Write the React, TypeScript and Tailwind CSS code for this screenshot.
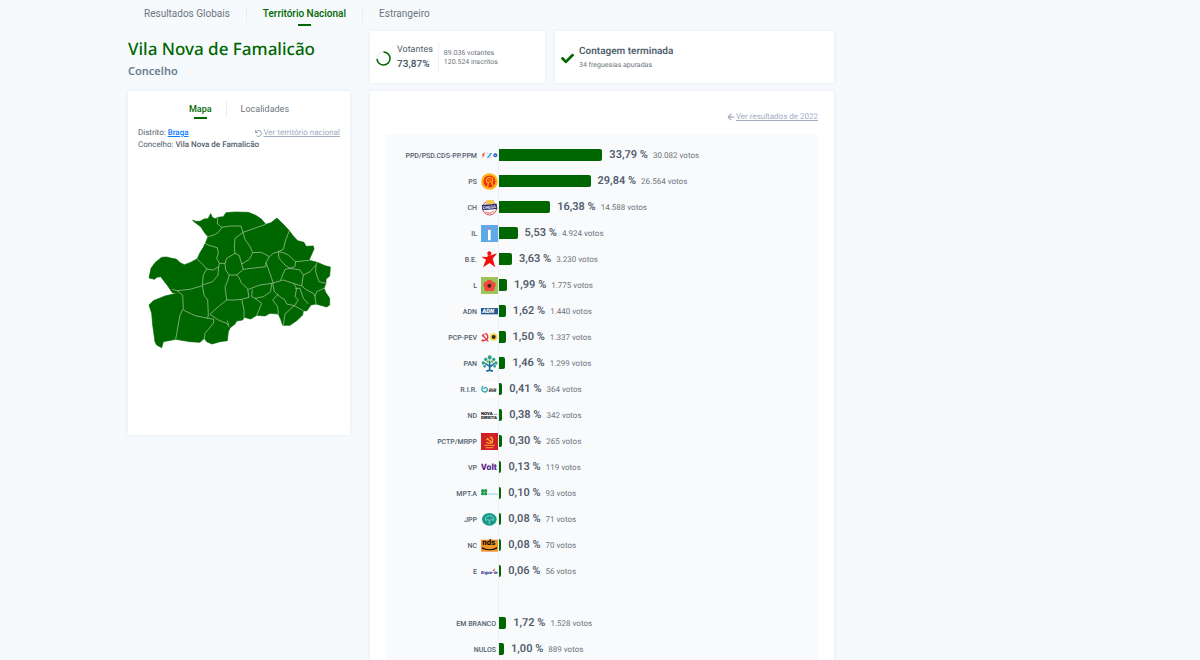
import { useState, type ReactNode } from 'react'
import { FaArrowLeft, FaCheck, FaUndo } from 'react-icons/fa'

interface Result {
  party: string
  percent: number
  votes: number
  logo?: ReactNode
}

const LOGO = 'block w-[17px] h-[17px]'

const results: Result[] = [
  {
    party: 'PPD/PSD.CDS-PP.PPM', percent: 33.79, votes: 30082,
    logo: (
      <svg viewBox="0 0 51 51" className={LOGO}>
        <path d="M8 17l-6 8h4l-3 9 9-11H8l4-6z" fill="#e8503a" />
        <path d="M17 32l8-9 2-5 6 0-3 6-8 9z" fill="#2ea3e6" />
        <path d="M18 20h5M28 31h5" stroke="#f0a04b" strokeWidth="2" />
        <circle cx="43" cy="25" r="6" fill="#1e56b8" />
        <path d="M40 25h6" stroke="#fff" strokeWidth="2" />
      </svg>
    ),
  },
  {
    party: 'PS', percent: 29.84, votes: 26564,
    logo: (
      <svg viewBox="0 0 51 51" className={LOGO}>
        <circle cx="25.500" cy="25.500" r="25" fill="#fdb515" />
        <circle cx="25.500" cy="25.500" r="18" fill="#f02a10" />
        <path d="M20 42l2-12c-6-2-8-8-4-13 4-5 12-5 16 0 2 4 1 9-2 12l5 10" fill="none" stroke="#fdb515" strokeWidth="4" />
        <path d="M22 20l8 2M23 26l7 1" stroke="#fdb515" strokeWidth="3" />
      </svg>
    ),
  },
  {
    party: 'CH', percent: 16.38, votes: 14588,
    logo: (
      <svg viewBox="0 0 51 51" className={LOGO}>
        <circle cx="26" cy="27" r="21" fill="#fff" stroke="#d9485a" strokeWidth="3" />
        <path d="M16 4l22-1 2 12-25 2z" fill="#f2c94c" />
        <path d="M14 38q12 10 25-2" fill="none" stroke="#e0a18a" strokeWidth="5" />
        <path d="M2 18l45-4 2 16-45 4z" fill="#2a2a6c" />
        <text x="5" y="29" fontSize="12" fontWeight="700" fill="#fff" transform="rotate(-5 25 25)">CHEGA</text>
      </svg>
    ),
  },
  {
    party: 'IL', percent: 5.53, votes: 4924,
    logo: (
      <svg viewBox="0 0 51 51" className={LOGO}>
        <rect width="51" height="51" fill="#5fa9e8" />
        <path d="M21 46V16l4-5 4 5v30z" fill="#fff" />
        <circle cx="25" cy="11" r="3" fill="#e96a6a" />
      </svg>
    ),
  },
  {
    party: 'B.E.', percent: 3.63, votes: 3230,
    logo: (
      <svg viewBox="0 0 51 51" className={LOGO}>
        <circle cx="25" cy="7" r="6" fill="#f40b0b" />
        <path d="M20 13l10 0 18-6-13 16 8 26-17-13-20 13 9-23L1 17l18 1z" fill="#f40b0b" />
      </svg>
    ),
  },
  {
    party: 'L', percent: 1.99, votes: 1775,
    logo: (
      <svg viewBox="0 0 51 51" className={LOGO}>
        <rect width="51" height="51" fill="#9cc35c" />
        <g fill="#ef4a3c">
          <circle cx="25" cy="17" r="9" />
          <circle cx="16" cy="23" r="9" />
          <circle cx="35" cy="23" r="9" />
          <circle cx="19" cy="34" r="9" />
          <circle cx="32" cy="34" r="9" />
        </g>
        <circle cx="25" cy="26" r="6" fill="#4a1f1a" />
      </svg>
    ),
  },
  {
    party: 'ADN', percent: 1.62, votes: 1440,
    logo: (
      <svg viewBox="0 0 51 51" className={LOGO}>
        <rect y="15" width="51" height="19" fill="#245a96" />
        <text x="4" y="31" fontSize="18" fontWeight="900" fontStyle="italic" fill="#fff">ADN</text>
        <path d="M25 31l4-12" stroke="#e8d24a" strokeWidth="2" />
      </svg>
    ),
  },
  {
    party: 'PCP-PEV', percent: 1.5, votes: 1337,
    logo: (
      <svg viewBox="0 0 51 51" className={LOGO}>
        <path d="M13 13c10 4 10 18-1 21-4 1-7 0-9-2M6 20l16 17M3 22l7-7M2 37l5-5" fill="none" stroke="#e2343c" strokeWidth="4" />
        <circle cx="38" cy="24" r="11" fill="#f5d63c" />
        <circle cx="38" cy="24" r="6" fill="#3a2317" />
      </svg>
    ),
  },
  {
    party: 'PAN', percent: 1.46, votes: 1299,
    logo: (
      <svg viewBox="0 0 51 51" className={LOGO}>
        <path d="M26 49V18M26 34L12 25M26 36l15-11M16 49q10-6 20 0" fill="none" stroke="#1f6f9c" strokeWidth="5" />
        <g fill="#2aa18f">
          <circle cx="26" cy="7" r="6" />
          <circle cx="14" cy="13" r="5" />
          <circle cx="38" cy="13" r="5" />
          <circle cx="7" cy="24" r="5" />
          <circle cx="45" cy="24" r="5" />
          <circle cx="11" cy="34" r="4" />
          <circle cx="41" cy="34" r="4" />
        </g>
        <g fill="#7cc06a">
          <circle cx="20" cy="20" r="4" />
          <circle cx="33" cy="20" r="4" />
          <circle cx="26" cy="14" r="3" />
        </g>
      </svg>
    ),
  },
  {
    party: 'R.I.R.', percent: 0.41, votes: 364,
    logo: (
      <svg viewBox="0 0 51 51" className={LOGO}>
        <rect y="2" width="51" height="47" fill="#fff" />
        <path d="M6 15c-6 8-3 18 5 18 9 0 11-10 4-13-4-2-7 2-6 5" fill="none" stroke="#35a7b8" strokeWidth="4" />
        <text x="23" y="34" fontSize="15" fontWeight="900" fontStyle="italic" fill="#333">RIR</text>
      </svg>
    ),
  },
  {
    party: 'ND', percent: 0.38, votes: 342,
    logo: (
      <svg viewBox="0 0 51 51" className={LOGO}>
        <text x="0" y="24" fontSize="13" fontWeight="900" fill="#111">NOVA</text>
        <path d="M38 22h11" stroke="#777" strokeWidth="2" />
        <text x="0" y="35" fontSize="13" fontWeight="900" fill="#111">DIREITA</text>
      </svg>
    ),
  },
  {
    party: 'PCTP/MRPP', percent: 0.3, votes: 265,
    logo: (
      <svg viewBox="0 0 51 51" className={LOGO}>
        <rect width="51" height="51" fill="#d01f27" />
        <path d="M27 12c11 3 10 17-1 19-5 0-8-1-10-4M20 18l15 13M16 21l6-6" fill="none" stroke="#f3a72e" strokeWidth="4" />
        <path d="M10 37h31M14 44h23" stroke="#f08a2c" strokeWidth="4" />
      </svg>
    ),
  },
  {
    party: 'VP', percent: 0.13, votes: 119,
    logo: (
      <svg viewBox="0 0 51 51" className={LOGO}>
        <text x="0" y="34" fontSize="26" fontWeight="900" fill="#5b2a8c">Volt</text>
      </svg>
    ),
  },
  {
    party: 'MPT.A', percent: 0.1, votes: 93,
    logo: (
      <svg viewBox="0 0 51 51" className={LOGO}>
        <g fill="#1f9a4d">
          <circle cx="5" cy="17" r="5" />
          <circle cx="14" cy="17" r="5" />
          <circle cx="5" cy="26" r="5" />
          <circle cx="14" cy="26" r="5" />
        </g>
        <text x="20" y="30" fontSize="10" fill="#63c6d8">aliança</text>
      </svg>
    ),
  },
  {
    party: 'JPP', percent: 0.08, votes: 71,
    logo: (
      <svg viewBox="0 0 51 51" className={LOGO}>
        <ellipse cx="25" cy="25" rx="22" ry="19" fill="#179b8b" />
        <path d="M14 28q-4-12 11-14 16 2 12 14-6-4-12 0-5-4-11 0zM25 28v12" fill="none" stroke="#7fd0c2" strokeWidth="3" />
      </svg>
    ),
  },
  {
    party: 'NC', percent: 0.08, votes: 70,
    logo: (
      <svg viewBox="0 0 51 51" className={LOGO}>
        <rect y="8" width="51" height="36" fill="#f3962a" />
        <text x="4" y="25" fontSize="24" fontWeight="900" fill="#1a1008">nds</text>
        <path d="M3 30q22 14 45 0v5q-22 10-45 0z" fill="#1a1008" />
      </svg>
    ),
  },
  {
    party: 'E', percent: 0.06, votes: 56,
    logo: (
      <svg viewBox="0 0 51 51" className={LOGO}>
        <text x="0" y="34" fontSize="13" fontWeight="900" fontStyle="italic" fill="#2c2f8f">Ergue-te</text>
        <path d="M34 24l8-9-2 9z" fill="#e8402f" />
      </svg>
    ),
  },
]

const otherVotes: Result[] = [
  { party: 'EM BRANCO', percent: 1.72, votes: 1528 },
  { party: 'NULOS', percent: 1, votes: 889 },
]

const formatPercent = (n: number) => n.toFixed(2).replace('.', ',')
const formatVotes = (n: number) => String(n).replace(/\B(?=(\d{3})+$)/g, '.')

function ResultRow({ result }: { result: Result }) {
  return (
    <tr className="h-[26px]">
      <th
        scope="row"
        colSpan={result.logo ? 1 : 2}
        className={result.logo
          ? 'w-[91px] p-0 pt-[2px] text-right text-[7px] leading-3 font-medium whitespace-nowrap'
          : 'p-0 pt-[2px] pr-[2px] text-right text-[7px] leading-3 font-medium whitespace-nowrap'}
      >
        {result.party}
      </th>
      {result.logo && <td className="w-[21px] p-0 pl-1">{result.logo}</td>}
      <td className="border-l border-[#eceff4] p-0">
        <div className="flex items-center">
          <div className="h-3 rounded-r-xs bg-[#006600]" style={{ width: result.percent * 3 + 2 }} />
          <span className="ml-[7px] text-[11px] leading-4 font-semibold">{formatPercent(result.percent)} %</span>
          <span className="ml-[5px] pt-px text-[8px] text-[#6c757d]">{formatVotes(result.votes)} votos</span>
        </div>
      </td>
    </tr>
  )
}

// parish borders inside the municipality
const borders = [
  'M233 53L232 72 246 82 235 97 222 105 205 110',
  'M246 82L270 78 303 78 309 97 377 73',
  'M195 130L210 137 232 143 235 160 230 175 238 190 255 190 260 175 285 160 283 140 285 115 309 97',
  'M172 178L185 190 195 200 200 207 220 210 236 200 238 190',
  'M200 207L190 225 187 255 218 245 234 225 236 200',
  'M97 268L110 272 150 268 187 257 192 285 203 300 205 345 203 355',
  'M110 272L128 285 130 325 120 345 107 418',
  'M130 330L165 347 205 355 222 358 220 370 195 400 193 415',
  'M255 190L257 210 268 225 290 225 310 208 305 192 298 167 285 160',
  'M268 225L262 245 255 262 260 300 235 320 210 343 235 360 260 370 268 382M262 362L266 376',
  'M260 300L285 300 305 298 327 292 323 268',
  'M309 97L315 118 330 140 338 158 328 178 305 192',
  'M338 158L365 157 388 170 400 160 415 155 430 148 437 120 448 92',
  'M388 170L378 188 377 200 335 205 310 208M378 188L388 215 400 250',
  'M290 225L297 232 305 250 325 268 360 255 395 250 430 240 460 250 485 258',
  'M415 155L417 175 435 195 450 205 465 200 467 185 445 165 430 158 415 155',
  'M467 185L507 181M450 205L435 208 422 240',
  'M450 205L480 210 490 225 485 258 500 270 520 280 525 290',
  'M490 225L510 215 528 195 532 187M528 195L527 215 537 245 558 250',
  'M552 265L530 275 525 290 528 312',
  'M460 250L470 265 465 290 475 300 463 317 490 332M465 265L480 265 490 295 505 312',
  'M463 317L435 342 430 376M398 250L403 275 420 290 435 300 440 312 463 317',
  'M415 282L398 300 413 320 415 342M395 250L392 275 370 290 345 295 335 290 337 268',
  'M305 298L312 330 312 352M345 295L365 310 355 335 350 346',
]

function MunicipalityMap() {
  return (
    <svg viewBox="18 27 558 420" className="mx-auto mt-[58px] w-[186px]" role="img" aria-label="Mapa de Vila Nova de Famalicão">
      <path
        fill="#006600"
        stroke="#006600"
        strokeWidth="2"
        strokeLinejoin="round"
        d="M27 234L33 205 45 188 65 172 80 171 95 175 108 177 122 189 133 194 150 188 172 176 180 158 190 142 198 125 204 110 195 100 182 80 163 66 158 60 167 64 180 64 192 57 204 56 212 41 217 52 225 56 235 52 250 50 258 38 285 36 325 37 347 46 365 58 377 73 393 68 411 54 430 73 448 92 458 106 473 122 492 127 498 139 520 138 522 147 507 181 532 187 555 197 571 201 569 228 558 238 558 250 552 265 557 277 569 295 569 315 560 321 528 312 513 315 500 333 490 332 488 345 470 362 450 376 428 376 422 358 415 342 390 340 375 348 350 346 332 357 312 352 308 360 290 363 285 372 270 384 265 395 262 422 240 425 216 432 200 425 193 415 180 427 150 425 107 418 70 425 65 443 50 435 45 425 38 375 35 340 27 315 40 302 75 288 110 280 97 278 85 260 62 230 50 232 44 238z"
      />
      <path fill="none" stroke="#b5cfa9" strokeWidth="2" strokeLinejoin="round" d={borders.join('')} />
    </svg>
  )
}

const levels = ['Resultados Globais', 'Território Nacional', 'Estrangeiro']
const views = ['Mapa', 'Localidades']

export default function App() {
  const [level, setLevel] = useState('Território Nacional')
  const [view, setView] = useState('Mapa')

  return (
    <div className="min-h-screen bg-[#f6fafd] px-32 font-[Roboto,sans-serif] text-[#525f6e] [text-rendering:geometricPrecision]">
      <nav className="flex h-[27px] divide-x divide-[#e9edf2] pt-[6px]">
        {levels.map(l => (
          <div key={l} className="flex h-4 items-start px-4">
            <button
              onClick={() => setLevel(l)}
              className={l === level
                ? 'flex flex-col items-center text-[10px] leading-4 font-medium text-[#006600]'
                : 'text-[10px] leading-4 text-[#6c757d]'}
            >
              {l}
              {l === level && <span className="mt-[2px] h-[2px] w-[13px] bg-[#006600]" />}
            </button>
          </div>
        ))}
      </nav>

      <div className="grid grid-cols-[minmax(0,222fr)_minmax(0,464fr)_minmax(0,218fr)] items-start gap-5 pt-1">
        <aside>
          <div className="h-[60px] pt-1 font-['Noto_Sans',sans-serif]">
            <h1 className="text-[17px] leading-7 font-medium whitespace-nowrap text-[#006600]">Vila Nova de Famalicão</h1>
            <h2 className="pt-px text-[11px] leading-4 font-semibold text-[#6b7a90]">Concelho</h2>
          </div>
          <section className="h-[344px] rounded-xs bg-white px-[10px] shadow-[0_0_4px_#e4eaf1]">
            <div className="flex justify-center divide-x divide-[#e9edf2] pt-[10px]">
              {views.map(v => (
                <div key={v} className="flex h-4 items-start px-[14px]">
                  <button
                    onClick={() => setView(v)}
                    className={v === view
                      ? 'flex flex-col items-center text-[9px] leading-4 font-medium text-[#006600]'
                      : 'text-[9px] leading-4 text-[#6c757d]'}
                  >
                    {v}
                    {v === view && <span className="h-[2px] w-[13px] bg-[#006600]" />}
                  </button>
                </div>
              ))}
            </div>
            <div className="pt-[10px] text-[8px] leading-3 whitespace-nowrap">
              <div className="flex justify-between">
                <p>Distrito: <a href="#braga" className="font-medium text-[#0a7cff] underline">Braga</a></p>
                <a href="#nacional" className="flex items-center gap-px text-[#a3acbf]">
                  <FaUndo className="text-[7px]" />
                  <span className="underline">Ver território nacional</span>
                </a>
              </div>
              <p>Concelho: <span className="font-medium">Vila Nova de Famalicão</span></p>
            </div>
            <MunicipalityMap />
          </section>
        </aside>

        <main>
          <div className="mb-2 flex gap-[10px]">
            <section className="flex h-[52px] w-[175px] items-center bg-white pt-[2px] pl-[6px] shadow-[0_0_4px_#e4eaf1]">
              <svg viewBox="0 0 15 15" className="size-[15px]">
                <circle cx="7.500" cy="7.500" r="6.500" fill="none" stroke="#e6ebf0" />
                <circle
                  cx="7.500" cy="7.500" r="6.500" fill="none" stroke="#006600" strokeWidth="1.500"
                  pathLength="100" strokeDasharray="73.870 100" transform="rotate(-90 7.500 7.500)"
                />
              </svg>
              <div className="ml-[6px] border-r border-[#eef1f5] pr-[5px]">
                <p className="text-[9px] leading-[14px]">Votantes</p>
                <p className="text-[10px] leading-4 font-semibold">73,87%</p>
              </div>
              <div className="ml-[5px] pb-px text-[7px] leading-[9px] text-[#6c757d]">
                <p>89.036 votantes</p>
                <p>120.524 inscritos</p>
              </div>
            </section>
            <section className="flex h-[52px] flex-1 items-center bg-white pt-[2px] pl-[6px] shadow-[0_0_4px_#e4eaf1]">
              <FaCheck className="text-[13px] text-[#006600]" />
              <div className="ml-[5px]">
                <p className="text-[10px] leading-[14px] font-semibold">Contagem terminada</p>
                <p className="text-[7px] leading-3 text-[#6c757d]">34 freguesias apuradas</p>
              </div>
            </section>
          </div>

          <section className="bg-white px-4 pt-5 pb-6 shadow-[0_0_4px_#e4eaf1]">
            <a href="#2022" className="mb-[11px] flex h-3 items-center justify-end gap-px text-[8px] text-[#a3acbf]">
              <FaArrowLeft />
              <span className="underline">Ver resultados de 2022</span>
            </a>
            <div className="rounded-xs bg-[#f9fafc] py-2">
              <table className="w-full border-separate border-spacing-0">
                <tbody>
                  {results.map(r => <ResultRow key={r.party} result={r} />)}
                  <tr className="h-[26px]">
                    <td colSpan={2} />
                    <td className="border-l border-[#eceff4]" />
                  </tr>
                  {otherVotes.map(r => <ResultRow key={r.party} result={r} />)}
                </tbody>
              </table>
            </div>
          </section>
        </main>
      </div>
    </div>
  )
}
